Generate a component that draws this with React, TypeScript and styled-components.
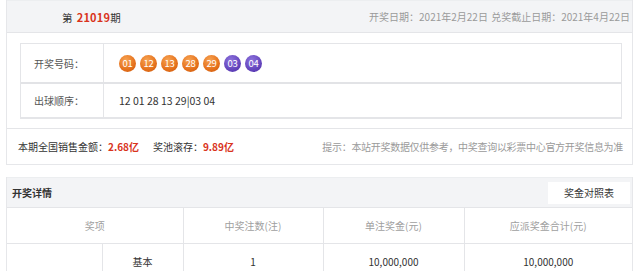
import styled, { createGlobalStyle } from "styled-components";

const GlobalStyle = createGlobalStyle`
  html, body {
    margin: 0;
    padding: 0;
    background: #fff;
  }
  body {
    font-family: "Noto Sans CJK SC", "Liberation Sans", sans-serif;
    font-size: 10px;
    color: #333;
  }
`;

const Page = styled.div`
  width: 627px;
  margin-left: 6px;
  display: flex;
  flex-direction: column;
  gap: 12px;
`;

const Panel = styled.section`
  border: 1px solid #e6e7ea;
  border-top: none;
  background: #fff;
`;

const PanelHead = styled.div<{ $tall?: boolean }>`
  height: ${(p) => (p.$tall ? 31 : 29)}px;
  background: #f3f4f6;
  border-bottom: 1px solid #e4e5e8;
  border-top: 1px solid #eceef0;
  display: flex;
  align-items: center;
  justify-content: space-between;
  padding: 0 2px 0 ${(p) => (p.$tall ? 55 : 5)}px;
`;

const Issue = styled.div`
  font-size: 10.5px;
  color: #333;
  letter-spacing: 0.2px;
  b {
    color: #d9331c;
    font-weight: 700;
    font-size: 11px;
    margin-left: 4px;
  }
`;

const Dates = styled.div`
  color: #9a9a9a;
  font-size: 10px;
  letter-spacing: 0;
  word-spacing: 1px;
`;

const Body = styled.div`
  padding: 10px 10px 9px 13px;
`;

const InnerTable = styled.div`
  border: 1px solid #e4e5e8;
  border-bottom-width: 2px;
`;

const InnerRow = styled.div<{ $h: number }>`
  display: flex;
  height: ${(p) => p.$h}px;
  & + & {
    border-top: 2px solid #e2e3e6;
  }
`;

const Label = styled.div`
  width: 83px;
  border-right: 1px solid #e4e5e8;
  display: flex;
  align-items: center;
  padding-left: 13px;
  box-sizing: border-box;
  color: #555;
`;

const Value = styled.div`
  flex: 1;
  display: flex;
  align-items: center;
  padding-left: 15px;
  gap: 4px;
  color: #333;
  font-size: 10.5px;
`;

const Ball = styled.span<{ $blue?: boolean }>`
  width: 17px;
  height: 17px;
  border-radius: 50%;
  display: inline-flex;
  align-items: center;
  justify-content: center;
  color: #fff;
  font-size: 9.5px;
  letter-spacing: -0.3px;
  background: ${(p) =>
    p.$blue
      ? "radial-gradient(circle at 40% 30%, #8c72dc 0%, #5e3fb8 70%, #4a2ea0 100%)"
      : "radial-gradient(circle at 40% 30%, #f7a352 0%, #e5711c 60%, #c8560a 100%)"};
`;

const SalesRow = styled.div`
  height: 35px;
  border-top: 1px solid #e4e5e8;
  display: flex;
  align-items: center;
  justify-content: space-between;
  padding: 0 9px 0 11px;
`;

const Sales = styled.div`
  color: #333;
  b {
    color: #d9331c;
    font-weight: 700;
  }
  span + span {
    margin-left: 14px;
  }
`;

const Hint = styled.div`
  color: #9a9a9a;
  letter-spacing: -0.3px;
`;

const DetailTitle = styled.div`
  font-weight: 700;
  color: #333;
`;

const TableButton = styled.button`
  width: 82px;
  height: 22px;
  border: none;
  background: #fff;
  font-family: inherit;
  font-size: 10px;
  color: #333;
  cursor: pointer;
`;

const Table = styled.table`
  width: 100%;
  border-collapse: collapse;
  table-layout: fixed;
`;

const Col = styled.col<{ $w?: number }>`
  width: ${(p) => (p.$w ? `${p.$w}px` : "auto")};
`;

const Th = styled.th`
  height: 33px;
  font-weight: 400;
  color: #a0a0a0;
  border-right: 1px solid #e4e5e8;
  border-bottom: 1px solid #e4e5e8;
  &:last-child {
    border-right: none;
  }
`;

const Td = styled.td`
  height: 33px;
  text-align: center;
  color: #333;
  border-right: 1px solid #e4e5e8;
  border-bottom: 1px solid #e4e5e8;
  &:last-child {
    border-right: none;
  }
`;

const front = ["01", "12", "13", "28", "29"];
const back = ["03", "04"];

export default function App() {
  return (
    <>
      <GlobalStyle />
      <Page>
        <Panel>
          <PanelHead $tall>
            <Issue>
              第<b>21019</b>期
            </Issue>
            <Dates>开奖日期：2021年2月22日 兑奖截止日期：2021年4月22日</Dates>
          </PanelHead>
          <Body>
            <InnerTable>
              <InnerRow $h={38}>
                <Label>开奖号码：</Label>
                <Value>
                  {front.map((n) => (
                    <Ball key={"f" + n}>{n}</Ball>
                  ))}
                  {back.map((n) => (
                    <Ball key={"b" + n} $blue>
                      {n}
                    </Ball>
                  ))}
                </Value>
              </InnerRow>
              <InnerRow $h={33}>
                <Label>出球顺序：</Label>
                <Value>12 01 28 13 29|03 04</Value>
              </InnerRow>
            </InnerTable>
          </Body>
          <SalesRow>
            <Sales>
              <span>
                本期全国销售金额：<b>2.68亿</b>
              </span>
              <span>
                奖池滚存：<b>9.89亿</b>
              </span>
            </Sales>
            <Hint>提示：本站开奖数据仅供参考，中奖查询以彩票中心官方开奖信息为准</Hint>
          </SalesRow>
        </Panel>
        <Panel>
          <PanelHead>
            <DetailTitle>开奖详情</DetailTitle>
            <TableButton>奖金对照表</TableButton>
          </PanelHead>
          <Table>
            <colgroup>
              <Col $w={95} />
              <Col $w={81} />
              <Col $w={140} />
              <Col $w={141} />
              <Col />
            </colgroup>
            <thead>
              <tr>
                <Th colSpan={2}>奖项</Th>
                <Th>中奖注数(注)</Th>
                <Th>单注奖金(元)</Th>
                <Th>应派奖金合计(元)</Th>
              </tr>
            </thead>
            <tbody>
              <tr>
                <Td rowSpan={2}></Td>
                <Td>基本</Td>
                <Td>1</Td>
                <Td>10,000,000</Td>
                <Td>10,000,000</Td>
              </tr>
            </tbody>
          </Table>
        </Panel>
      </Page>
    </>
  );
}
